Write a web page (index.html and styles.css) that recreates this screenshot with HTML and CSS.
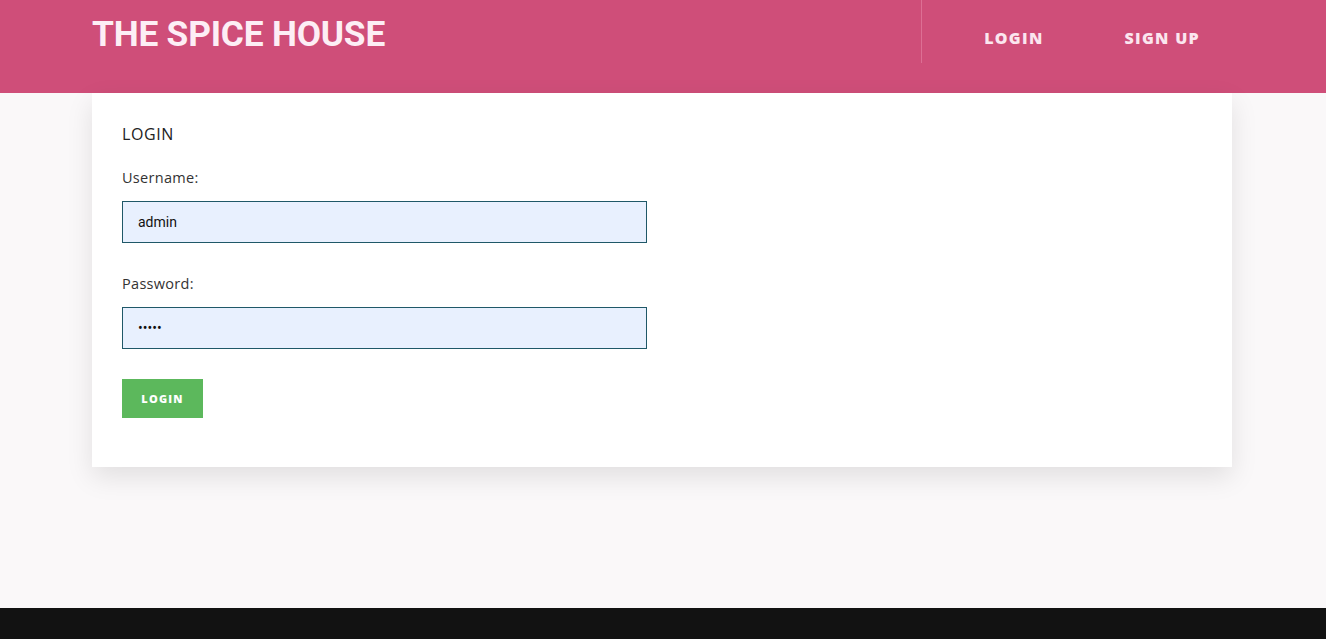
FILE: index.html
```html
<!DOCTYPE html>
<html lang="en">
<head>
<meta charset="utf-8">
<title>The Spice House - Login</title>
<link rel="stylesheet" href="styles.css">
</head>
<body>
<header class="site-header">
  <div class="container header-inner">
    <div class="brand">THE SPICE HOUSE</div>
    <nav class="nav">
      <a class="nav-link" href="#">LOGIN</a>
      <a class="nav-link" href="#">SIGN UP</a>
    </nav>
  </div>
</header>
<main class="main">
  <div class="container">
    <section class="card">
      <h2 class="card-title">LOGIN</h2>
      <form class="form">
        <label class="label" for="u">Username:</label>
        <input class="input" id="u" type="text" value="admin">
        <label class="label label-gap" for="p">Password:</label>
        <input class="input" id="p" type="password" value="admin">
        <button class="btn" type="button">LOGIN</button>
      </form>
    </section>
  </div>
</main>
<footer class="footer"></footer>
</body>
</html>
```
FILE: styles.css
```css
* { box-sizing: border-box; }
html, body { margin: 0; padding: 0; }
body {
  background: #faf8f9;
  font-family: "Open Sans", "Lato", sans-serif;
  color: #222;
  min-height: 639px;
  display: flex;
  flex-direction: column;
}
.container {
  width: 1140px;
  margin-left: calc(50% - 571px);
}
.site-header {
  background: #cf4e79;
  height: 93px;
}
.header-inner {
  display: flex;
  justify-content: space-between;
  height: 100%;
}
.brand {
  font-family: Roboto, "Liberation Sans", sans-serif;
  font-weight: 700;
  font-size: 35.3px;
  color: #fdeef5;
  padding-top: 13px;
  line-height: 42px;
  letter-spacing: -0.2px;
}
.nav {
  display: flex;
  align-items: flex-start;
  border-left: 1px solid #dd6f94;
  height: 63px;
  margin-top: 0;
  padding-left: 62px;
  padding-right: 32px;
}
.nav-link {
  font-family: "Open Sans", sans-serif;
  font-weight: 800;
  font-size: 16px;
  letter-spacing: 1.3px;
  color: #fbe6ef;
  text-decoration: none;
  line-height: 20px;
  margin-top: 28px;
}
.nav-link + .nav-link { margin-left: 81px; }
.main {
  flex: 1;
}
.card {
  background: #fff;
  box-shadow: 0 10px 25px rgba(0,0,0,0.10);
  padding: 32px 30px 49px;
}
.card-title {
  margin: 0 0 26px;
  font-weight: 400;
  font-size: 16px;
  line-height: 18px;
  color: #222;
  letter-spacing: 0.6px;
}
.form {
  display: flex;
  flex-direction: column;
  align-items: flex-start;
}
.label {
  font-size: 14.5px;
  line-height: 18px;
  color: #333;
  letter-spacing: 0.3px;
  margin-bottom: 14px;
}
.label-gap { margin-top: 32px; }
.input {
  width: 525px;
  height: 42px;
  border: 1px solid #1f5868;
  background: #e8f0fe;
  padding: 0 15px;
  font-family: Roboto, "Liberation Sans", sans-serif;
  font-size: 14px;
  color: #111;
  outline: none;
}
.btn {
  margin-top: 30px;
  width: 81px;
  height: 39px;
  background: #5cb85c;
  border: none;
  color: #fff;
  font-family: "Open Sans", sans-serif;
  font-weight: 800;
  font-size: 11px;
  letter-spacing: 1.2px;
  padding: 0;
}
.footer {
  background: #121212;
  height: 31px;
  margin-top: 0;
}
```
